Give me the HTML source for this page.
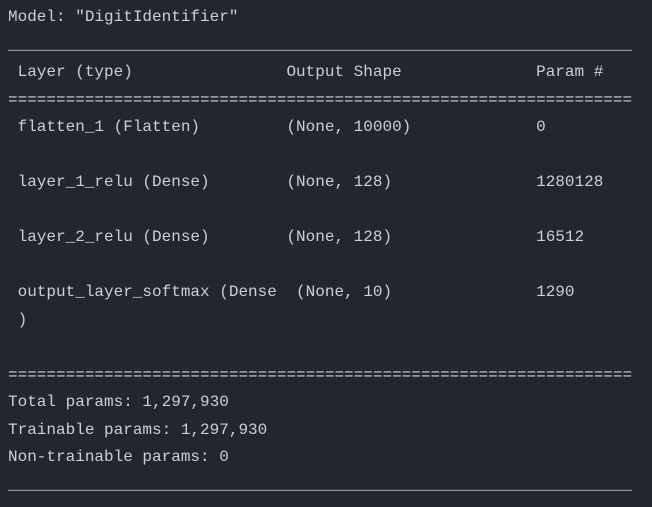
<!DOCTYPE html>
<html><head><style>
html,body{margin:0;padding:0;background:#23262d;width:652px;height:507px;overflow:hidden}
pre{margin:0;padding:4px 0 0 8px;font-family:"Liberation Mono","DejaVu Sans Mono",monospace;font-size:16px;line-height:27.5px;color:#ccd0d6;white-space:pre}
</style></head><body><pre>Model: "DigitIdentifier"
_________________________________________________________________
 Layer (type)                Output Shape              Param #   
=================================================================
 flatten_1 (Flatten)         (None, 10000)             0         
                                                                 
 layer_1_relu (Dense)        (None, 128)               1280128   
                                                                 
 layer_2_relu (Dense)        (None, 128)               16512     
                                                                 
 output_layer_softmax (Dense  (None, 10)               1290      
 )                                                               
                                                                 
=================================================================
Total params: 1,297,930
Trainable params: 1,297,930
Non-trainable params: 0
_________________________________________________________________</pre></body></html>
